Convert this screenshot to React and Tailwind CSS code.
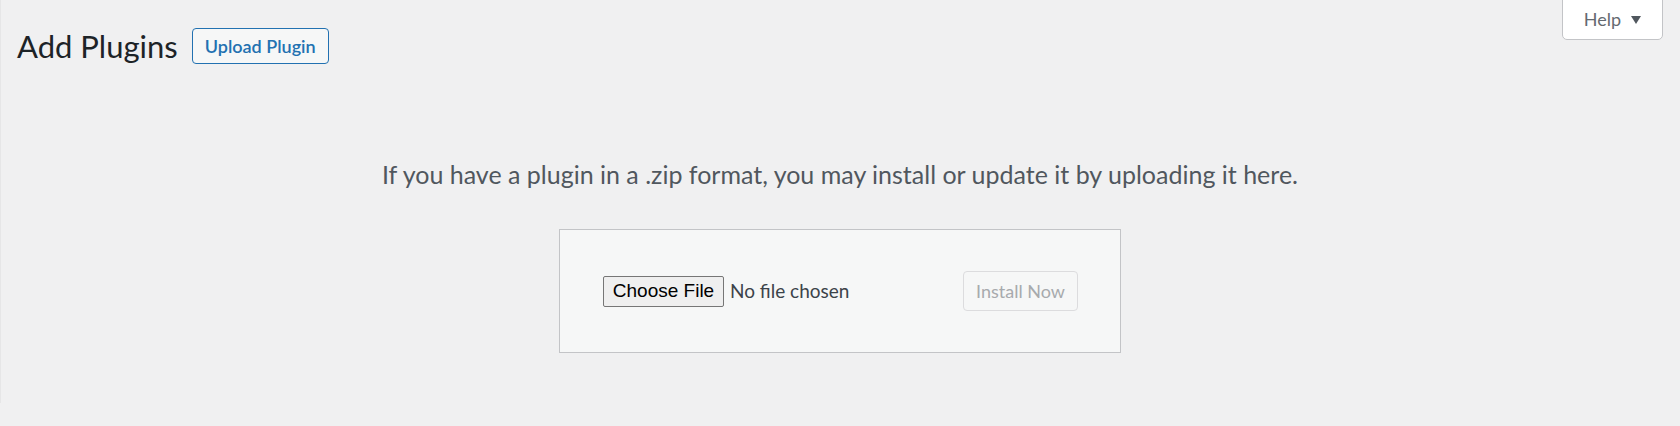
import React from 'react';

const HelpTab = () => (
    <div className="absolute right-[17px] top-[-1px] w-[101px] h-[41px] bg-white border border-[#c3c4c7] rounded-b-[5px] flex items-center justify-center gap-[10px] text-[18px] text-[#646970]">
        <span>Help</span>
        <svg width="10" height="8" viewBox="0 0 10 8" className="mt-[1px]">
            <path d="M0 0 L10 0 L5 8 Z" fill="#50575e" />
        </svg>
    </div>
);

const App = () => {
    return (
        <div className="relative w-full h-[426px] bg-[#f0f0f1] overflow-hidden font-['Lato',sans-serif]">
            <div className="absolute left-0 top-0 h-[403px] border-l border-[#e6e6e7]" />
            <HelpTab />

            {/* Page title */}
            <div className="flex items-center gap-[14px] pl-[17px] pt-[28px]">
                <h1 className="text-[31px] leading-[36px] text-[#1d2327] font-normal">Add Plugins</h1>
                <button className="h-[36px] px-[12px] border border-[#2271b1] rounded-[4px] bg-[#f6f7f7] text-[#2271b1] text-[18px] font-semibold">
                    Upload Plugin
                </button>
            </div>

            {/* Help text */}
            <p className="mt-[94px] text-center text-[25px] leading-[32px] text-[#50575e]">
                If you have a plugin in a .zip format, you may install or update it by uploading it here.
            </p>

            {/* Upload form */}
            <div className="ml-[559px] mt-[39px] w-[562px] h-[124px] bg-[#f6f7f7] border border-[#c3c4c7] flex items-center justify-between pl-[43px] pr-[42px]">
                <div className="flex items-center gap-[6px]">
                    <button className="h-[31px] w-[121px] border border-[#767676] rounded-[2px] bg-[#efefef] text-[19px] text-black font-['Liberation_Sans',Arial,sans-serif]">
                        Choose File
                    </button>
                    <span className="text-[19px] text-[#3c434a]">No file chosen</span>
                </div>
                <button disabled className="h-[40px] w-[115px] border border-[#dcdcde] rounded-[4px] bg-[#f6f7f7] text-[#a7aaad] text-[18px]">
                    Install Now
                </button>
            </div>
        </div>
    );
};

export default App;
